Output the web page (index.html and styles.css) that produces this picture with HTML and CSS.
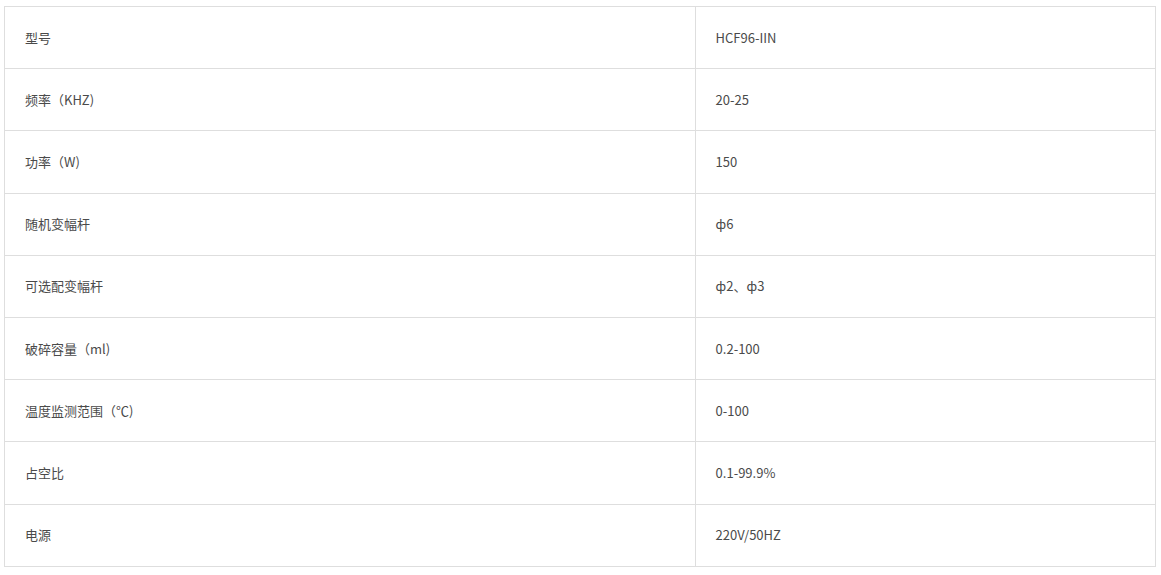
FILE: index.html
```html
<!DOCTYPE html>
<html lang="zh">
<head>
<meta charset="utf-8">
<link rel="stylesheet" href="styles.css">
</head>
<body>
<table class="spec">
  <tbody>
    <tr><td class="key">型号</td><td class="val">HCF96-IIN</td></tr>
    <tr><td class="key">频率（KHZ)</td><td class="val">20-25</td></tr>
    <tr><td class="key">功率（W)</td><td class="val">150</td></tr>
    <tr><td class="key">随机变幅杆</td><td class="val">ф6</td></tr>
    <tr><td class="key">可选配变幅杆</td><td class="val">ф2、ф3</td></tr>
    <tr><td class="key">破碎容量（ml)</td><td class="val">0.2-100</td></tr>
    <tr><td class="key">温度监测范围（℃)</td><td class="val">0-100</td></tr>
    <tr><td class="key">占空比</td><td class="val">0.1-99.9%</td></tr>
    <tr><td class="key">电源</td><td class="val">220V/50HZ</td></tr>
  </tbody>
</table>
</body>
</html>
```
FILE: styles.css
```css
html, body {
  margin: 0;
  padding: 0;
  background: #fff;
}
body {
  font-family: "Noto Sans CJK SC", "Noto Sans", sans-serif;
  font-size: 13px;
  color: #4a4a4a;
}
.spec {
  margin: 6px 4px;
  width: 1152px;
  border-collapse: collapse;
  table-layout: fixed;
}
.spec td {
  border: 1px solid #dedede;
  padding: 0 20px;
  height: 62.2px;
  box-sizing: border-box;
  vertical-align: middle;
  line-height: 20px;
}
.spec .key {
  width: 60%;
}
```
